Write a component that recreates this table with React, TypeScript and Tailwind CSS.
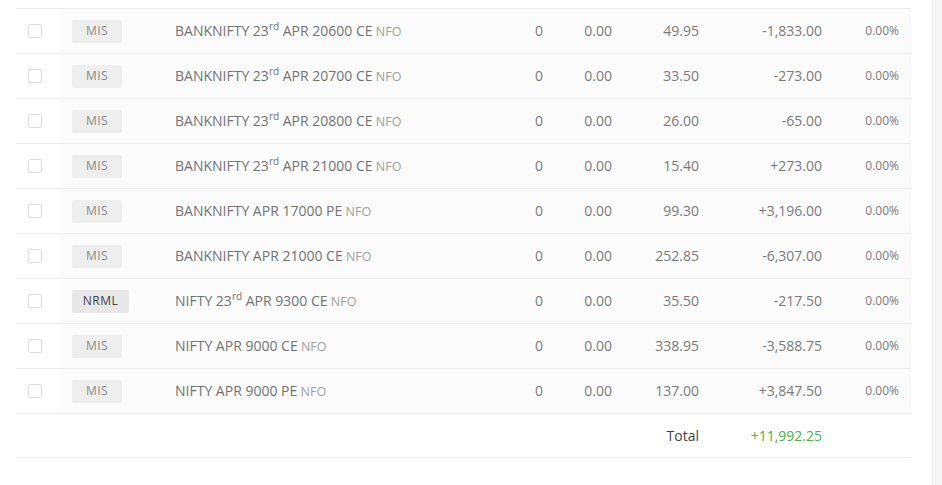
import React from "react";

type Row = { prod: string; name: string; sup?: boolean; rest: string; qty: string; avg: string; ltp: string; pnl: string; chg: string };

const rows: Row[] = [
  { prod: "MIS", name: "BANKNIFTY 23", sup: true, rest: " APR 20600 CE", qty: "0", avg: "0.00", ltp: "49.95", pnl: "-1,833.00", chg: "0.00%" },
  { prod: "MIS", name: "BANKNIFTY 23", sup: true, rest: " APR 20700 CE", qty: "0", avg: "0.00", ltp: "33.50", pnl: "-273.00", chg: "0.00%" },
  { prod: "MIS", name: "BANKNIFTY 23", sup: true, rest: " APR 20800 CE", qty: "0", avg: "0.00", ltp: "26.00", pnl: "-65.00", chg: "0.00%" },
  { prod: "MIS", name: "BANKNIFTY 23", sup: true, rest: " APR 21000 CE", qty: "0", avg: "0.00", ltp: "15.40", pnl: "+273.00", chg: "0.00%" },
  { prod: "MIS", name: "BANKNIFTY APR 17000 PE", rest: "", qty: "0", avg: "0.00", ltp: "99.30", pnl: "+3,196.00", chg: "0.00%" },
  { prod: "MIS", name: "BANKNIFTY APR 21000 CE", rest: "", qty: "0", avg: "0.00", ltp: "252.85", pnl: "-6,307.00", chg: "0.00%" },
  { prod: "NRML", name: "NIFTY 23", sup: true, rest: " APR 9300 CE", qty: "0", avg: "0.00", ltp: "35.50", pnl: "-217.50", chg: "0.00%" },
  { prod: "MIS", name: "NIFTY APR 9000 CE", rest: "", qty: "0", avg: "0.00", ltp: "338.95", pnl: "-3,588.75", chg: "0.00%" },
  { prod: "MIS", name: "NIFTY APR 9000 PE", rest: "", qty: "0", avg: "0.00", ltp: "137.00", pnl: "+3,847.50", chg: "0.00%" },
];

export default function App() {
  return (
    <div className="flex w-[942px] h-[485px] bg-white overflow-hidden" style={{ fontFamily: '"Open Sans", sans-serif' }}>
      <div className="w-[932px] pl-4 pr-[21px] pt-2">
        <div className="border-t border-[#eeeeee]">
          {rows.map((r, i) => (
            <div key={i} className="flex h-[45px] border-b border-[#eeeeee] items-center text-[14px] text-[#7a7a7a]">
              <div className="w-[44px] h-full flex items-center pl-3 bg-white">
                <div className="w-[14px] h-[14px] border border-[#dddddd] rounded-[2px] bg-white" />
              </div>
              <div className="flex-1 h-full flex items-center bg-[#fbfbfb]">
                <div className="w-[103px] pl-3">
                  {r.prod === "NRML" ? (
                    <span className="inline-flex items-center justify-center h-[23px] w-[57px] rounded-[2px] bg-[#e8e8e8] text-[12px] text-[#444444] tracking-[0.5px]">NRML</span>
                  ) : (
                    <span className="inline-flex items-center justify-center h-[23px] w-[50px] rounded-[2px] bg-[#eeeeee] text-[12px] text-[#8a8a8a] tracking-[0.5px]">MIS</span>
                  )}
                </div>
                <div className="flex-1 pl-3 whitespace-nowrap text-[#737373] -mt-px">
                  {r.name}
                  {r.sup && <span className="text-[10px] relative top-[-6px] leading-none">rd</span>}
                  {r.rest}
                  <span className="text-[12.5px] text-[#a0a0a0]"> NFO</span>
                </div>
                <div className="w-[80px] pr-3 text-right -mt-px">{r.qty}</div>
                <div className="w-[69px] pr-3 text-right -mt-px">{r.avg}</div>
                <div className="w-[87px] pr-3 text-right -mt-px">{r.ltp}</div>
                <div className="w-[123px] pr-3 text-right -mt-px">{r.pnl}</div>
                <div className="w-[77px] pr-3 text-right text-[12px] -mt-px">{r.chg}</div>
              </div>
            </div>
          ))}
          <div className="flex h-[44px] border-b border-[#eeeeee] items-center text-[14px]">
            <div className="flex-1" />
            <div className="w-[87px] pr-3 text-right text-[#444444] -mt-px">Total</div>
            <div className="w-[123px] pr-3 text-right text-[#4caf50] -mt-px">+11,992.25</div>
            <div className="w-[77px]" />
          </div>
        </div>
      </div>
      <div className="w-[10px] h-full bg-[#f6f6f6] border-l border-[#f0f0f0]" />
    </div>
  );
}
